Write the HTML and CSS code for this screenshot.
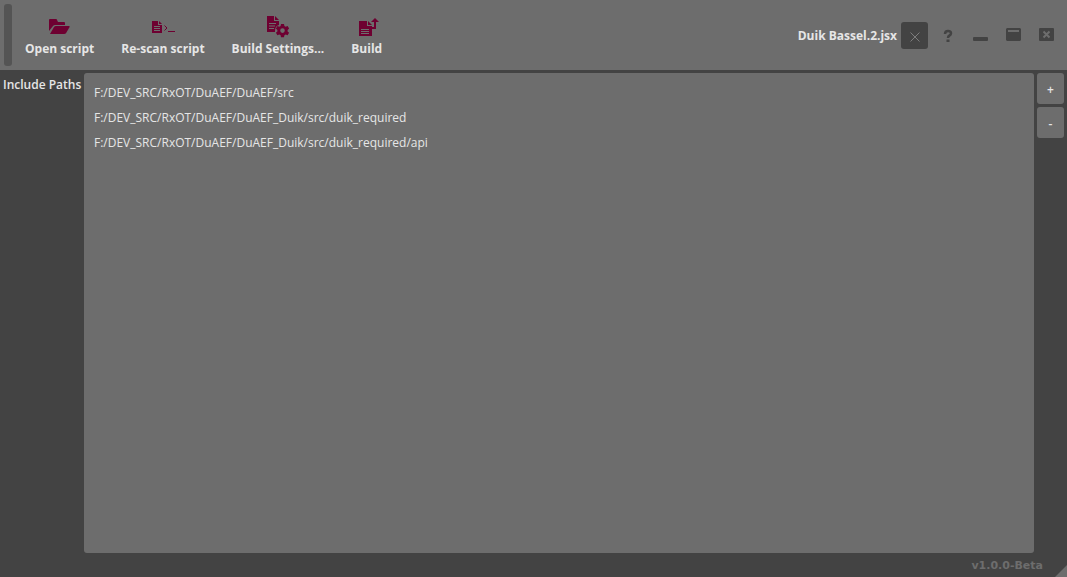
FILE: index.html
```html
<!DOCTYPE html>
<html lang="en">
<head>
<meta charset="utf-8">
<title>Duik Bassel.2.jsx</title>
<link rel="stylesheet" href="styles.css">
</head>
<body>
<header class="toolbar">
  <div class="handle"></div>
  <nav class="actions">
    <button class="action" type="button">
      <svg class="icon" width="24" height="24" viewBox="0 0 24 24"><path d="M1 17V6q0-1 1-1h6q1 0 1 1l1 2h6q1 0 1 1v2H7q-1 0-2 1z"/><path d="M2 20l4-7q.6-1 2-1h13q1 0 .6 1l-3.500 6q-.6 1-2 1z"/></svg>
      Open script
    </button>
    <button class="action" type="button">
      <svg class="icon" width="24" height="24" viewBox="0 0 24 24"><path fill-rule="evenodd" d="M1 7h6v4h4v8H1zM3 12v1h6v-1zM3 14v1h6v-1zM3 16v1h6v-1z"/><path d="M8 7l3 3H8z"/><path class="thin" d="M13.500 11.500l2.500 2.500-2.500 2.500M17 17.500h7"/></svg>
      Re-scan script
    </button>
    <button class="action" type="button">
      <svg class="icon" width="24" height="24" viewBox="0 0 24 24"><path fill-rule="evenodd" d="M1 2h7v5h5v4q-4 1-4 6v1H1zM3 9v1h7V9zM3 11.500v1h6v-1zM3 14v1h5v-1z"/><path d="M9 2l4 4H9z"/><path fill-rule="evenodd" d="M15 10h3l.4 2 1.300.7 1.900-.7 1.500 2.600-1.500 1.300v1.500l1.500 1.300-1.500 2.600-1.900-.7-1.300.7-.4 2h-3l-.4-2-1.300-.7-1.900.7-1.500-2.600 1.500-1.300v-1.500l-1.500-1.300 1.500-2.600 1.900.7 1.300-.7zM16.500 14.300a2.300 2.300 0 1 0 0 4.600 2.300 2.300 0 0 0 0-4.600z"/></svg>
      Build Settings...
    </button>
    <button class="action" type="button">
      <svg class="icon" width="24" height="24" viewBox="0 0 24 24"><path fill-rule="evenodd" d="M4 7h8v5h5v10H4zM6 15v1h8v-1zM6 17v1h8v-1zM6 19v1h8v-1z"/><path d="M13 7l4 4h-4z"/><path d="M16 15h5V8h3l-4-4-4 4h3v5h-3z"/></svg>
      Build
    </button>
  </nav>
  <div class="window-tools">
    <span class="document">Duik Bassel.2.jsx</span>
    <button class="close-doc" type="button" aria-label="Close script"><svg width="10" height="10" viewBox="0 0 10 10"><path d="M.5.5l9 9M9.500.5l-9 9"/></svg></button>
    <button class="tool" type="button" aria-label="Help"><svg width="16" height="16" viewBox="0 0 16 16"><path class="stroke" d="M5 7q0-3 3-3t3 2.300q0 1.500-1.500 2.200T8 11"/><path d="M6.500 12.500h3v2.500h-3z"/></svg></button>
    <button class="tool" type="button" aria-label="Minimize"><svg width="16" height="16" viewBox="0 0 16 16"><rect y="10" width="15" height="4" rx="1"/></svg></button>
    <button class="tool" type="button" aria-label="Maximize"><svg width="16" height="16" viewBox="0 0 16 16"><path fill-rule="evenodd" d="M1 1h13l1 1v11l-1 1H1l-1-1V2zM2 3v2h11V3z"/></svg></button>
    <button class="tool" type="button" aria-label="Close"><svg width="16" height="16" viewBox="0 0 16 16"><rect y="1" width="15" height="13" rx="1"/><path class="cross" d="M4.500 4.500l6 6M10.500 4.500l-6 6"/></svg></button>
  </div>
</header>
<main class="content">
  <h1 class="label">Include Paths</h1>
  <ul class="paths">
    <li>F:/DEV_SRC/RxOT/DuAEF/DuAEF/src</li>
    <li>F:/DEV_SRC/RxOT/DuAEF/DuAEF_Duik/src/duik_required</li>
    <li>F:/DEV_SRC/RxOT/DuAEF/DuAEF_Duik/src/duik_required/api</li>
  </ul>
  <div class="side">
    <button class="edit" type="button">+</button>
    <button class="edit" type="button">-</button>
  </div>
</main>
<footer class="status">
  <span>v1.0.0-Beta</span>
  <svg width="12" height="12" viewBox="0 0 12 12"><path d="M12 0v12H0z"/></svg>
</footer>
</body>
</html>
```
FILE: styles.css
```css
* { box-sizing: border-box; }
body {
  margin: 0;
  min-height: 100vh;
  display: flex;
  flex-direction: column;
  background: #434343;
  color: #e6e6e6;
  font: 600 12px/16px "Open Sans", sans-serif;
}
button {
  border: 0;
  padding: 0;
  background: none;
  color: inherit;
  font: inherit;
}
.toolbar {
  display: flex;
  height: 70px;
  padding: 4px;
  background: #6d6d6d;
}
.handle {
  width: 8px;
  border-radius: 3px;
  background: #545454;
}
.actions {
  display: flex;
  gap: 1px;
}
.action {
  display: flex;
  flex-direction: column;
  align-items: center;
  padding: 10px 13px 0;
  font-weight: bold;
  white-space: nowrap;
}
.icon {
  margin-bottom: 3px;
  fill: #6e0031;
}
.thin {
  fill: none;
  stroke: #6e0031;
}
.window-tools {
  display: flex;
  align-items: center;
  margin-left: auto;
  height: 62px;
  padding-right: 8px;
}
.document {
  margin-right: 4px;
  padding-top: 2px;
  font-weight: bold;
}
.close-doc {
  display: grid;
  place-items: center;
  width: 27px;
  height: 27px;
  margin-right: 12px;
  padding-top: 3px;
  border-radius: 3px;
  background: #434343;
}
.close-doc path {
  stroke: #7d7d7d;
}
.tool {
  display: grid;
  margin-right: 17px;
  fill: #434343;
}
.tool:last-child { margin-right: 0; }
.stroke {
  fill: none;
  stroke: #434343;
  stroke-width: 2.500;
}
.cross {
  stroke: #6d6d6d;
  stroke-width: 2;
}
.content {
  flex: 1;
  display: grid;
  grid-template-columns: 78px 1fr 27px;
  gap: 3px;
  padding: 3px 3px 0;
}
.label {
  margin: 4px 0;
  font-size: 12px;
  font-weight: 600;
  white-space: nowrap;
}
.paths {
  margin: 0;
  padding: 7px 10px;
  border-radius: 3px;
  background: #6d6d6d;
  list-style: none;
  font-weight: 400;
  line-height: 25px;
}
.side {
  display: flex;
  flex-direction: column;
  gap: 3px;
}
.edit {
  height: 31px;
  padding-top: 2px;
  border-radius: 3px;
  background: #6d6d6d;
}
.status {
  display: flex;
  justify-content: flex-end;
  align-items: flex-end;
  gap: 12px;
  height: 24px;
  color: #6d6d6d;
  font: bold 11px/16px "DejaVu Sans", Verdana, sans-serif;
  fill: #6d6d6d;
}
.status span { padding-bottom: 3px; }
```
